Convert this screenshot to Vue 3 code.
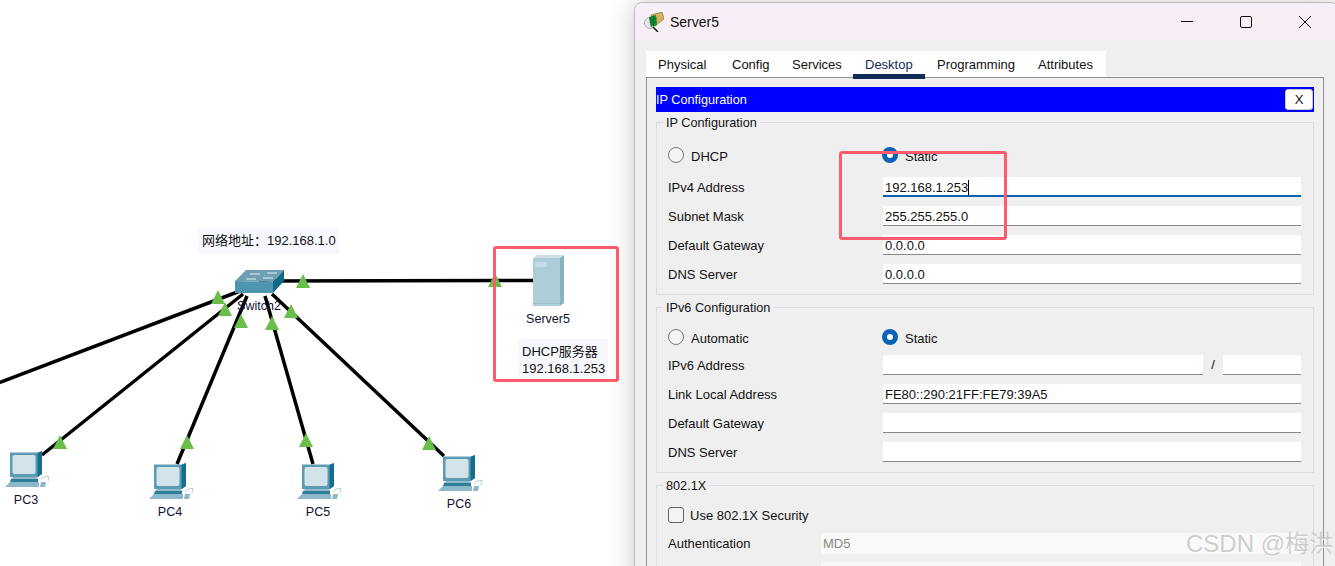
<template>
  <div class="page">
    <!-- topology canvas -->
    <svg class="canvas" width="635" height="566" viewBox="0 0 635 566">
      <defs>
        <g id="pc">
          <path d="M5 1.500 H33 L37 0 V23 L33 26 H5 Z" fill="#5c9bb3" />
          <path d="M32.500 2 L37 0 V23 L32.500 26 Z" fill="#12708e" />
          <rect x="7.500" y="4" width="23" height="19" rx="2" fill="#d3e3ea" />
          <path d="M8 26 H32 L33 28 H6 Z" fill="#8db8c7" />
          <path d="M6 28 H33 V31 H5 Z" fill="#2f7f9c" />
          <path d="M5 31 H34 V36 H0 Z" fill="#8db8c7" />
          <path d="M36 31 H41 L40 36 H35 Z" fill="#8db8c7" />
          <path d="M36 29 Q38 25 44 25.500 L43 30" fill="none" stroke="#b4cfd9" stroke-width="1" />
        </g>
      </defs>

      <g stroke="#000" stroke-width="3.500">
        <line x1="259" y1="281" x2="533" y2="280.500" />
        <line x1="240" y1="291" x2="-4" y2="384" />
        <line x1="243" y1="294" x2="42" y2="455" />
        <line x1="247" y1="296" x2="177" y2="464" />
        <line x1="265" y1="296" x2="313" y2="464" />
        <line x1="272" y1="294" x2="444" y2="456" />
      </g>

      <!-- switch -->
      <path d="M235 281 L246 270 L284 270 L273 282 Z" fill="#709fb3" />
      <path d="M235 281 L273 282 V293 H235 Z" fill="#4f95b0" />
      <path d="M273 282 L284 270 V281 L273 293 Z" fill="#0f6a88" />
      <path d="M250 274 H260 M267 273 H277 M246 279 H256 M263 278 H273" stroke="#e4eef2" stroke-width="1" />
      <text class="node-label" x="259" y="310" text-anchor="middle">Switch2</text>

      <!-- server -->
      <path d="M533 258 L537 255 L564 255 L560 258 Z" fill="#cfe1e7" />
      <path d="M560 258 L564 255 V303 L560 306 Z" fill="#86b4c2" />
      <rect x="533" y="258" width="27" height="48" fill="#acced9" />
      <rect x="535" y="262" width="12" height="5" fill="#c4dce4" />
      <rect x="533" y="303" width="27" height="1" fill="#9dbfcb" />
      <text class="node-label" x="548" y="323" text-anchor="middle">Server5</text>

      <use href="#pc" x="5" y="451" />
      <use href="#pc" x="149" y="463" />
      <use href="#pc" x="297" y="463" />
      <use href="#pc" x="438" y="455" />
      <text class="node-label" x="26" y="504" text-anchor="middle">PC3</text>
      <text class="node-label" x="170" y="516" text-anchor="middle">PC4</text>
      <text class="node-label" x="318" y="516" text-anchor="middle">PC5</text>
      <text class="node-label" x="459" y="508" text-anchor="middle">PC6</text>

      <polygon
        v-for="t in links"
        :key="t[0] + '-' + t[1]"
        :points="`${t[0]},${t[1] + 14} ${t[0] + 7},${t[1]} ${t[0] + 14},${t[1] + 14}`"
        fill="#6abf4b"
      />

      <rect x="198" y="228" width="141" height="26" fill="#f7f8fe" />
      <text class="note" x="202" y="245">网络地址：192.168.1.0</text>
      <rect x="518" y="339" width="90" height="41" fill="#f7f8fe" />
      <text class="note" x="522" y="356">DHCP服务器</text>
      <text class="note" x="522" y="373">192.168.1.253</text>
    </svg>

    <!-- Server5 window -->
    <section class="window">
      <header class="titlebar">
        <svg class="app-icon" width="20" height="20" viewBox="0 0 20 20">
          <circle cx="6" cy="11" r="5.500" fill="#e8e8e8" stroke="#aaa" />
          <line x1="9" y1="15" x2="14" y2="20" stroke="#222" stroke-width="1.600" />
          <path d="M7 3 L18 0 L20 7 L11 14 Z" fill="#d8b25c" stroke="#7a6a30" stroke-width=".6" />
          <path d="M5 5 L12 3 L13 13 L7 15 Z" fill="#1b8a2a" />
          <path d="M7 4.500 V14 M9.500 3.500 V14 M5 7 H13 M5 10 H13" stroke="#063" stroke-width=".7" />
        </svg>
        <span class="title">Server5</span>
        <div class="controls">
          <svg width="12" height="12" viewBox="0 0 12 12"><line x1="0" y1="5.500" x2="12" y2="5.500" stroke="#111" /></svg>
          <svg width="12" height="12" viewBox="0 0 12 12"><rect x=".5" y=".5" width="11" height="11" rx="1.500" fill="none" stroke="#111" /></svg>
          <svg width="12" height="12" viewBox="0 0 12 12"><path d="M0 0 L12 12 M12 0 L0 12" stroke="#111" fill="none" /></svg>
        </div>
      </header>

      <div class="body">
        <nav class="tabs">
          <span v-for="tab in tabs" :key="tab" class="tab" :class="{ active: tab === 'Desktop' }">{{ tab }}</span>
        </nav>

        <div class="panel">
          <div class="bluebar">
            <span>IP Configuration</span>
            <button class="close-x">X</button>
          </div>

          <fieldset class="group group-v4">
            <legend>IP Configuration</legend>
            <div class="radio-row">
              <label class="radio"><i class="dot"></i>DHCP</label>
              <label class="radio"><i class="dot on"></i>Static</label>
            </div>
            <div class="row">
              <span>IPv4 Address</span>
              <div class="input focus">192.168.1.253<b class="caret"></b></div>
            </div>
            <div class="row">
              <span>Subnet Mask</span>
              <div class="input">255.255.255.0</div>
            </div>
            <div class="row">
              <span>Default Gateway</span>
              <div class="input">0.0.0.0</div>
            </div>
            <div class="row">
              <span>DNS Server</span>
              <div class="input">0.0.0.0</div>
            </div>
          </fieldset>

          <fieldset class="group group-v6">
            <legend>IPv6 Configuration</legend>
            <div class="radio-row">
              <label class="radio"><i class="dot"></i>Automatic</label>
              <label class="radio"><i class="dot on"></i>Static</label>
            </div>
            <div class="row">
              <span>IPv6 Address</span>
              <div class="addr">
                <div class="input"></div>
                <span class="slash">/</span>
                <div class="input"></div>
              </div>
            </div>
            <div class="row">
              <span>Link Local Address</span>
              <div class="input">FE80::290:21FF:FE79:39A5</div>
            </div>
            <div class="row">
              <span>Default Gateway</span>
              <div class="input"></div>
            </div>
            <div class="row">
              <span>DNS Server</span>
              <div class="input"></div>
            </div>
          </fieldset>

          <fieldset class="group group-x">
            <legend>802.1X</legend>
            <label class="check"><i class="box"></i>Use 802.1X Security</label>
            <div class="row row-x">
              <span>Authentication</span>
              <div class="input off">MD5</div>
            </div>
            <div class="row row-x">
              <span></span>
              <div class="input off"></div>
            </div>
          </fieldset>
        </div>
      </div>
    </section>

    <!-- annotations on top of the screenshot -->
    <div class="mark mark-server"></div>
    <div class="mark mark-ip"></div>
    <div class="watermark">CSDN @梅洪</div>
  </div>
</template>

<script setup>
const tabs = ["Physical", "Config", "Services", "Desktop", "Programming", "Attributes"];

// green link lights, left/top of each triangle
const links = [
  [211, 290],
  [218, 302],
  [234, 314],
  [265, 316],
  [284, 304],
  [296, 274],
  [488, 273],
  [53, 435],
  [180, 435],
  [299, 433],
  [422, 436],
];
</script>

<style>
html,
body {
  margin: 0;
  background: #fff;
  overflow: hidden;
}
</style>

<style scoped>
.page {
  position: relative;
  width: 1335px;
  height: 566px;
  overflow: hidden;
  background: #fff;
  font-family: "Liberation Sans", "Noto Sans CJK SC", sans-serif;
  font-size: 12px;
  color: #111;
}
.canvas {
  position: absolute;
  left: 0;
  top: 0;
}
.node-label {
  font-size: 12.5px;
  fill: #101030;
}
.note {
  font-size: 13px;
  fill: #111;
}
.window {
  position: absolute;
  left: 634px;
  top: 2px;
  width: 705px;
  height: 600px;
  box-sizing: border-box;
  border: 1px solid #bdbdbd;
  border-radius: 8px 8px 0 0;
  background: #efefef;
  box-shadow: 0 0 26px rgba(0, 0, 0, 0.22);
}
.titlebar {
  height: 37px;
  display: flex;
  align-items: center;
  padding-left: 9px;
  background: #f7eef6;
  border-radius: 8px 8px 0 0;
}
.app-icon {
  margin-right: 6px;
}
.title {
  font-size: 14px;
}
.controls {
  margin-left: auto;
  display: flex;
  gap: 47px;
  margin-right: 27px;
}
.body {
  padding: 11px 0 0 11px;
}
.tabs {
  display: grid;
  grid-template-columns: 74px 60px 73px 72px 101px 1fr;
  width: 460px;
  height: 26px;
  background: #fff;
  padding-left: 12px;
  box-sizing: border-box;
  font-size: 13px;
}
.tab {
  position: relative;
  line-height: 28px;
}
.tab.active {
  color: #0f2d55;
}
.tab.active::after {
  content: "";
  position: absolute;
  left: -12px;
  width: 72px;
  bottom: 0;
  height: 5px;
  background: #0f2d55;
}
.panel {
  width: 678px;
  height: 520px;
  box-sizing: border-box;
  border: 1px solid #8f8f97;
  border-bottom: 0;
  padding: 9px 9px 0;
}
.bluebar {
  height: 25px;
  display: flex;
  align-items: center;
  justify-content: space-between;
  background: #0000ff;
  color: #fff;
  font-size: 12.7px;
  padding-right: 1px;
}
.close-x {
  width: 28px;
  height: 21px;
  padding: 0;
  border: 1px solid #ccc;
  border-radius: 3px;
  background: #fff;
  color: #111;
  font: 13px "Liberation Sans", sans-serif;
}
.group {
  margin: 2px 0 0;
  padding: 0 12px 10px 11px;
  border: 1px solid #dcdcdc;
  min-width: 0;
}
.group legend {
  margin-left: -5px;
  padding: 2px 3px 0;
  font-size: 12.7px;
  line-height: 15px;
}
.group-v6,
.group-x {
  margin-top: 4px;
}
.radio-row {
  display: grid;
  grid-template-columns: 214px 1fr;
  height: 20px;
  align-items: center;
  margin: 14px 0 12px;
  font-size: 13px;
}
.group-v6 .radio-row {
  margin: 11px 0 8px;
}
.radio {
  display: flex;
  align-items: center;
  gap: 7px;
  padding-top: 2px;
}
.dot {
  width: 16px;
  height: 16px;
  margin-top: -2px;
  box-sizing: border-box;
  border: 1px solid #777;
  border-radius: 50%;
  background: #f4f4f4;
}
.dot.on {
  border: 5px solid #0a63b5;
  background: #fff;
}
.row {
  display: grid;
  grid-template-columns: 215px 1fr;
  align-items: center;
  height: 20px;
  margin-top: 9px;
  font-size: 13px;
}
.row-x {
  grid-template-columns: 153px 1fr;
}
.row:nth-child(3) {
  margin-top: 0;
}
.input {
  height: 20px;
  line-height: 22px;
  box-sizing: border-box;
  padding-left: 2px;
  background: #fff;
  border-bottom: 1px solid #8a8a8a;
}
.input.focus {
  border-bottom: 2px solid #0a63b5;
}
.input.off {
  height: 21px;
  background: #f9f9f9;
  border-bottom: 0;
  color: #8a8a8a;
}
.caret {
  display: inline-block;
  width: 1px;
  height: 15px;
  vertical-align: -3px;
  background: #000;
}
.addr {
  display: grid;
  grid-template-columns: 320px 20px 78px;
}
.slash {
  text-align: center;
  line-height: 20px;
}
.check {
  display: flex;
  align-items: center;
  gap: 6px;
  height: 16px;
  margin: 13px 0 10px;
  font-size: 13px;
}
.box {
  width: 16px;
  height: 16px;
  box-sizing: border-box;
  border: 1px solid #666;
  border-radius: 3px;
  background: #f4f4f4;
}
.mark {
  position: absolute;
  box-sizing: border-box;
  border: 3px solid #ff5a6e;
  border-radius: 3px;
}
.mark-server {
  left: 493px;
  top: 246px;
  width: 126px;
  height: 136px;
}
.mark-ip {
  left: 839px;
  top: 151px;
  width: 168px;
  height: 89px;
}
.watermark {
  position: absolute;
  right: 2px;
  bottom: 7px;
  font-size: 24px;
  line-height: 30px;
  color: rgba(190, 190, 190, 0.75);
  text-shadow: 0 1px 1px rgba(255, 255, 255, 0.8);
}
</style>
